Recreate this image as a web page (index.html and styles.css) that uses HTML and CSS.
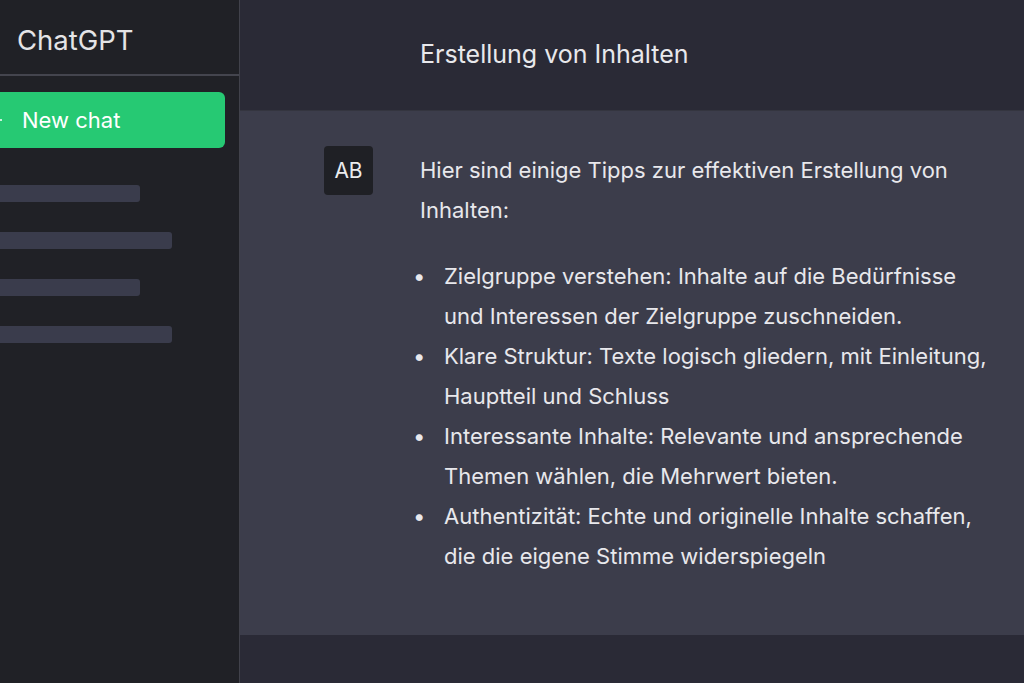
FILE: index.html
```html
<!DOCTYPE html>
<html lang="de">
<head>
  <meta charset="UTF-8">
  <title>ChatGPT</title>
  <link rel="stylesheet" href="styles.css">
</head>
<body>
  <aside class="sidebar">
    <div class="brand">ChatGPT</div>
    <button class="new-chat">
      <svg class="plus" width="28" height="28" viewBox="0 0 28 28">
        <path d="M14 4v20M4 14h20" stroke="#fff" stroke-width="1.6" fill="none"/>
      </svg>
      New chat
    </button>
    <div class="history">
      <div class="skel short"></div>
      <div class="skel long"></div>
      <div class="skel short"></div>
      <div class="skel long"></div>
    </div>
  </aside>

  <main class="main">
    <header class="topbar">Erstellung von Inhalten</header>

    <section class="message">
      <div class="avatar">AB</div>
      <div class="content">
        <p>Hier sind einige Tipps zur effektiven Erstellung von Inhalten:</p>
        <ul>
          <li>Zielgruppe verstehen: Inhalte auf die Bedürfnisse und Interessen der Zielgruppe zuschneiden.</li>
          <li>Klare Struktur: Texte logisch gliedern, mit Einleitung, Hauptteil und Schluss</li>
          <li>Interessante Inhalte: Relevante und ansprechende Themen wählen, die Mehrwert bieten.</li>
          <li>Authentizität: Echte und originelle Inhalte schaffen, die die eigene Stimme widerspiegeln</li>
        </ul>
      </div>
    </section>

    <div class="bottom"></div>
  </main>
</body>
</html>
```

FILE: styles.css
```css
* { box-sizing: border-box; }

html, body {
  margin: 0;
  height: 100%;
}

body {
  display: flex;
  font-family: Inter, "Liberation Sans", sans-serif;
  background: #2a2a36;
  color: #e8e8ec;
  overflow: hidden;
}

/* sidebar */
.sidebar {
  width: 240px;
  flex-shrink: 0;
  background: #202126;
  border-right: 1px solid #41424b;
  overflow: hidden;
}
.brand {
  height: 76px;
  padding: 23px 0 0 17px;
  font-size: 27.5px;
  color: #e4e4e6;
  border-bottom: 2px solid #44454e;
}
.new-chat {
  display: flex;
  align-items: center;
  width: 245px;
  height: 56px;
  margin: 16px 0 0 -20px;
  padding: 0;
  border: none;
  border-radius: 6px;
  background: #26c973;
  color: #fff;
  font-family: inherit;
  font-size: 22px;
}
.plus {
  margin: 0 16px 0 -2px;
}
.history {
  display: flex;
  flex-direction: column;
  gap: 30px;
  margin-top: 37px;
}
.skel {
  height: 17px;
  margin-left: -10px;
  background: #3a3c4c;
  border-radius: 3px;
}
.skel.short { width: 150px; }
.skel.long { width: 182px; }

/* main */
.main {
  flex: 1;
  display: flex;
  flex-direction: column;
}
.topbar {
  height: 111px;
  padding: 39px 0 0 180px;
  font-size: 25px;
  border-bottom: 1px solid #34353f;
}
.message {
  display: flex;
  gap: 47px;
  height: 524px;
  padding: 35px 0 0 84px;
  background: #3c3d4b;
}
.avatar {
  width: 49px;
  height: 49px;
  flex-shrink: 0;
  display: flex;
  align-items: center;
  justify-content: center;
  background: #1f2025;
  border-radius: 4px;
  font-size: 21px;
  color: #ececee;
}
.content {
  font-size: 22px;
  line-height: 40px;
  padding-top: 4px;
  padding-right: 28px;
}
.content p {
  margin: 0 0 26px;
}
.content ul {
  margin: 0;
  padding: 0;
  list-style: none;
}
.content li {
  padding-left: 24px;
}
.content li::before {
  content: "•";
  display: inline-block;
  width: 31px;
  margin-left: -31px;
}
.bottom {
  flex: 1;
  background: #2a2a36;
}
```
